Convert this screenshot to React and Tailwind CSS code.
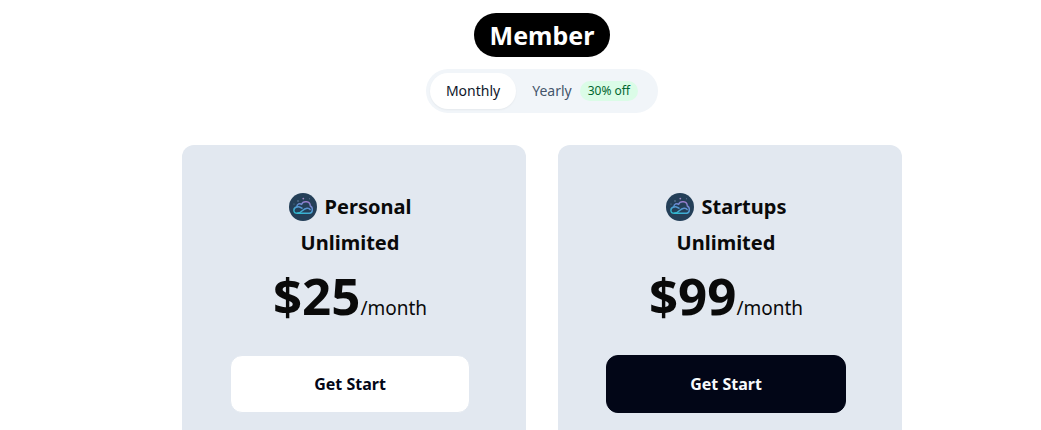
import React, { useState } from "react";

const plans = [
  { name: "Personal", price: "$25", yearly: "$17", dark: false },
  { name: "Startups", price: "$99", yearly: "$69", dark: true },
];

function CloudLogo({ id }) {
  return (
    <svg viewBox="0 0 28 28" className="w-7 h-7" aria-hidden="true">
      <defs>
        <linearGradient
          id={id}
          gradientUnits="userSpaceOnUse"
          x1="17"
          y1="8"
          x2="13"
          y2="21"
        >
          <stop offset="0" stopColor="#a07acb" />
          <stop offset="0.45" stopColor="#5f8fd3" />
          <stop offset="1" stopColor="#32b8d0" />
        </linearGradient>
      </defs>
      <circle cx="14" cy="14" r="14" fill="#243f58" />
      <g
        fill="none"
        stroke={`url(#${id})`}
        strokeWidth="1.4"
        strokeLinecap="round"
        strokeLinejoin="round"
      >
        <path d="M20.5 20.3H8.5C3.8 20.3 3.8 14.8 7.8 14C7.8 10.8 11 10 12.6 11.4C14 7.4 21.3 7.8 21.3 13C24.3 14.4 24 20.3 20.5 20.3" />
        <path d="M7.8 14C10.5 13 11.5 14.6 13 15.2" />
        <path d="M8.5 20.3C13 20 13.5 15.6 18 15.2C19.8 15.1 20.8 15.8 21.2 16.6" />
      </g>
      <circle cx="14.3" cy="5.6" r="0.9" fill="#a487c4" />
      <circle cx="9" cy="8" r="0.7" fill="#7c96b5" />
      <circle cx="5" cy="11" r="0.6" fill="#5f87a3" />
      <circle cx="20.5" cy="5.8" r="0.5" fill="#6d7fa6" />
    </svg>
  );
}

function PlanCard({ plan, yearly }) {
  return (
    <div className="flex flex-col items-center rounded-xl bg-slate-200 pt-11 pb-12 pl-12 pr-14">
      <h2 className="text-center text-xl leading-9 font-bold text-[#0a0a0a]">
        <span className="flex items-center justify-center gap-2">
          <CloudLogo id={`cloud-${plan.name}`} />
          {plan.name}
        </span>
        Unlimited
      </h2>
      <p className="mt-1 flex items-baseline text-[#0a0a0a]">
        <span className="text-[51px] leading-[60px] font-bold">
          {yearly ? plan.yearly : plan.price}
        </span>
        <span className="text-[19px]">/month</span>
      </p>
      <button
        type="button"
        className={`mt-[30px] h-[58px] w-full rounded-xl border font-bold ${
          plan.dark
            ? "border-[#020617] bg-[#020617] text-slate-50"
            : "border-slate-200 bg-white text-[#020617]"
        }`}
      >
        Get Start
      </button>
    </div>
  );
}

export default function App() {
  const [yearly, setYearly] = useState(false);

  return (
    <main className="flex flex-col items-center bg-white pt-[13px] pl-[43px] font-['Noto_Sans','Segoe_UI',sans-serif] text-black">
      <h1 className="rounded-full bg-black px-4 text-[25px] leading-[44px] font-bold text-white">
        Member
      </h1>

      {/* Billing period */}
      <div className="mt-3 flex h-11 rounded-full bg-slate-100 p-1 text-sm">
        <button
          type="button"
          onClick={() => setYearly(false)}
          className={`rounded-full px-4 ${
            yearly ? "text-slate-600" : "bg-white text-slate-900 shadow-xs"
          }`}
        >
          Monthly
        </button>
        <button
          type="button"
          onClick={() => setYearly(true)}
          className={`flex items-center gap-2 rounded-full px-4 ${
            yearly ? "bg-white text-slate-900 shadow-xs" : "text-slate-600"
          }`}
        >
          Yearly
          <span className="rounded-full bg-green-100 px-2 text-xs leading-5 text-green-800">
            30% off
          </span>
        </button>
      </div>

      {/* Plans */}
      <div className="mt-8 grid w-full max-w-[720px] grid-cols-2 gap-8">
        {plans.map((plan) => (
          <PlanCard key={plan.name} plan={plan} yearly={yearly} />
        ))}
      </div>
    </main>
  );
}
